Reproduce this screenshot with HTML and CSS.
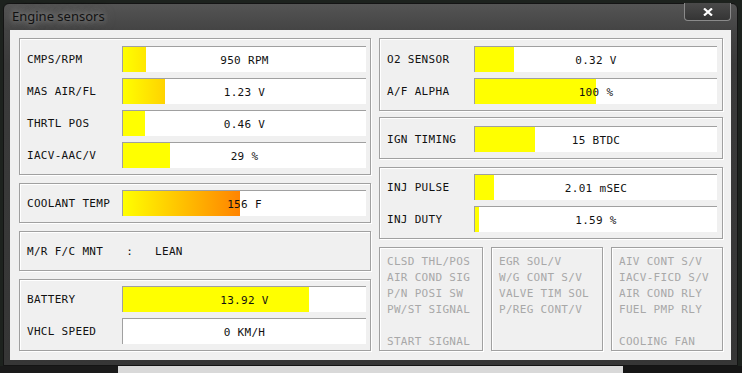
FILE: index.html
```html
<!DOCTYPE html>
<html lang="en">
<head>
    <meta charset="UTF-8">
    <title>Engine sensors</title>
    <link rel="stylesheet" href="styles.css">
</head>
<body>
    <div class="window">
        <div class="titlebar">
            <span class="title">Engine sensors</span>
            <button class="close" aria-label="Close">
                <svg width="10" height="8" viewBox="0 0 10 8"><path d="M1 0.5 L9 7.5 M9 0.5 L1 7.5" stroke="#fff" stroke-width="2.2" fill="none"/></svg>
            </button>
        </div>
        <div class="client">
            <div class="col col-left">
                <div class="group g-main">
                    <div class="row"><span class="label">CMPS/RPM</span><div class="bar"><div class="fill grad" style="width:23px"></div><span class="val">950 RPM</span></div></div>
                    <div class="row"><span class="label">MAS AIR/FL</span><div class="bar"><div class="fill grad" style="width:42px"></div><span class="val">1.23 V</span></div></div>
                    <div class="row"><span class="label">THRTL POS</span><div class="bar"><div class="fill" style="width:22px"></div><span class="val">0.46 V</span></div></div>
                    <div class="row"><span class="label">IACV-AAC/V</span><div class="bar"><div class="fill" style="width:47px"></div><span class="val">29 %</span></div></div>
                </div>
                <div class="group g-single">
                    <div class="row"><span class="label">COOLANT TEMP</span><div class="bar"><div class="fill grad" style="width:117px"></div><span class="val">156 F</span></div></div>
                </div>
                <div class="group g-text">
                    <span class="label">M/R F/C MNT</span><span class="colon">:</span><span class="state">LEAN</span>
                </div>
                <div class="group g-pair">
                    <div class="row"><span class="label">BATTERY</span><div class="bar"><div class="fill" style="width:186px"></div><span class="val">13.92 V</span></div></div>
                    <div class="row"><span class="label">VHCL SPEED</span><div class="bar"><div class="fill" style="width:0px"></div><span class="val">0 KM/H</span></div></div>
                </div>
            </div>
            <div class="col col-right">
                <div class="group g-pair g-o2">
                    <div class="row"><span class="label">O2 SENSOR</span><div class="bar"><div class="fill" style="width:39px"></div><span class="val">0.32 V</span></div></div>
                    <div class="row"><span class="label">A/F ALPHA</span><div class="bar"><div class="fill" style="width:121px"></div><span class="val">100 %</span></div></div>
                </div>
                <div class="group g-single g-ign">
                    <div class="row"><span class="label">IGN TIMING</span><div class="bar"><div class="fill" style="width:60px"></div><span class="val">15 BTDC</span></div></div>
                </div>
                <div class="group g-pair g-inj">
                    <div class="row"><span class="label">INJ PULSE</span><div class="bar"><div class="fill" style="width:19px"></div><span class="val">2.01 mSEC</span></div></div>
                    <div class="row"><span class="label">INJ DUTY</span><div class="bar"><div class="fill" style="width:4px"></div><span class="val">1.59 %</span></div></div>
                </div>
                <div class="switches">
                    <div class="group sw sw-a">
                        <span>CLSD THL/POS</span>
                        <span>AIR COND SIG</span>
                        <span>P/N POSI SW</span>
                        <span>PW/ST SIGNAL</span>
                        <span></span>
                        <span>START SIGNAL</span>
                    </div>
                    <div class="group sw">
                        <span>EGR SOL/V</span>
                        <span>W/G CONT S/V</span>
                        <span>VALVE TIM SOL</span>
                        <span>P/REG CONT/V</span>
                    </div>
                    <div class="group sw">
                        <span>AIV CONT S/V</span>
                        <span>IACV-FICD S/V</span>
                        <span>AIR COND RLY</span>
                        <span>FUEL PMP RLY</span>
                        <span></span>
                        <span>COOLING FAN</span>
                    </div>
                </div>
            </div>
        </div>
    </div>
    <div class="desk">
        <div class="desk-dark"></div>
        <div class="desk-light"></div>
        <div class="desk-dark2"></div>
    </div>
</body>
</html>
```

FILE: styles.css
```css
body {
    margin: 0;
    width: 742px;
    height: 373px;
    overflow: hidden;
    background: #1d221e;
    font-family: "DejaVu Sans Mono", "Liberation Mono", monospace;
    font-size: 11px;
    letter-spacing: 0.3px;
    color: #111;
}

.window {
    box-sizing: border-box;
    margin: 3px 0 0 3px;
    width: 735px;
    height: 363px;
    border: 1px solid #141414;
    border-radius: 6px 6px 0 0;
    background: linear-gradient(#545454, #444 26px, #3b3b3b 60px, #363636);
    padding: 0 6px 5px 6px;
    display: flex;
    flex-direction: column;
}

.titlebar {
    height: 26px;
    display: flex;
    align-items: flex-start;
}

.title {
    font-family: "Noto Sans", "Open Sans", sans-serif;
    font-size: 13px;
    letter-spacing: 0;
    color: #111;
    margin: 3px 0 0 2px;
    text-shadow: 0 0 6px rgba(200, 200, 200, 0.7), 0 0 12px rgba(160, 160, 160, 0.6);
}

.close {
    margin-left: auto;
    margin-top: -1px;
    width: 47px;
    height: 18px;
    padding: 0;
    border: 1px solid #8a8a8a;
    border-top: none;
    border-radius: 0 0 4px 4px;
    background: linear-gradient(#4a4a4a, #353535);
    display: flex;
    align-items: center;
    justify-content: center;
}

.client {
    flex: 1;
    background: #f0f0f0;
    padding: 8px 8px 0 9px;
    display: flex;
    gap: 8px;
}

.col {
    display: flex;
    flex-direction: column;
    gap: 8px;
}

.col-left {
    width: 352px;
}

.col-right {
    width: 344px;
}

.group {
    box-sizing: border-box;
    border: 1px solid #a0a0a0;
    box-shadow: 1px 1px 0 #fff, inset 1px 1px 0 #fff;
}

.col-left .group {
    padding: 0 4px 0 7px;
}

.col-right .group {
    padding: 0 5px 0 7px;
}

.g-main {
    height: 137px;
    padding-top: 7px !important;
    display: flex;
    flex-direction: column;
    gap: 6px;
}

.g-single {
    height: 40px;
    padding-top: 6px !important;
}

.g-pair {
    height: 72px;
    padding-top: 6px !important;
    display: flex;
    flex-direction: column;
    gap: 6px;
}

.g-o2 {
    height: 73px;
    padding-top: 7px !important;
}

.col-right .g-ign {
    height: 42px;
    margin-top: -2px;
    padding-top: 8px !important;
}

.g-text {
    height: 40px;
    display: flex;
    align-items: center;
}

.g-text .colon {
    margin-left: 23px;
}

.g-text .state {
    margin-left: 22px;
}

.row {
    display: grid;
    grid-template-columns: 95px 1fr;
    align-items: center;
}

.row .label {
    padding-top: 1px;
}

.col-right .row {
    grid-template-columns: 87px 1fr;
}

.bar {
    box-sizing: border-box;
    height: 26px;
    background: #fff;
    border-top: 1px solid #a0a0a0;
    border-left: 1px solid #a0a0a0;
    display: grid;
}

.fill {
    grid-area: 1 / 1;
    height: 100%;
    background: #ffff00;
}

.fill.grad {
    background: linear-gradient(90deg, #ffff00, #ff0000);
    background-size: 242px 100%;
    background-repeat: no-repeat;
}

.val {
    grid-area: 1 / 1;
    place-self: center;
    padding-top: 1px;
    white-space: pre;
}

.switches {
    display: flex;
    gap: 8px;
    height: 104px;
}

.sw {
    width: 112px;
    padding: 6px 0 0 7px !important;
    display: flex;
    flex-direction: column;
    color: #a8a8a8;
}

.sw-a {
    width: 104px;
}

.sw span {
    height: 16px;
    line-height: 16px;
    white-space: pre;
}

.desk {
    display: flex;
    height: 7px;
}

.desk-dark {
    width: 118px;
    background: #1a1a1a;
}

.desk-light {
    width: 505px;
    background: #d9d9d9;
}

.desk-dark2 {
    flex: 1;
    background: #161616;
}
```
